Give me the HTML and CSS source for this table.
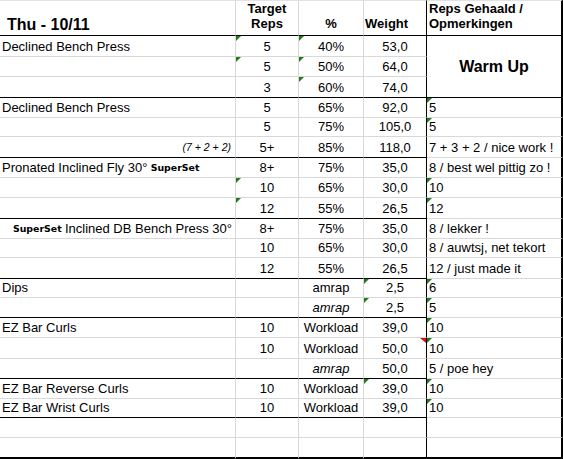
FILE: index.html
```html
<!DOCTYPE html>
<html lang="nl">
<head>
<meta charset="utf-8">
<title>Thu - 10/11</title>
<link rel="stylesheet" href="styles.css">
</head>
<body>
<div class="sheet">
  <div class="row head">
    <div class="c n1 title">Thu - 10/11</div>
    <div class="c n2 ctr">Target<br>Reps</div>
    <div class="c n3 ctr">%</div>
    <div class="c n4 hw">Weight</div>
    <div class="c n5">Reps Gehaald /<br>Opmerkingen</div>
  </div>

  <div class="row">
    <div class="c n1">Declined Bench Press</div>
    <div class="c n2 ctr tri">5</div>
    <div class="c n3 ctr tri">40%</div>
    <div class="c n4 ctr">53,0</div>
    <div class="c n5 warm">Warm Up</div>
  </div>
  <div class="row">
    <div class="c n1"></div>
    <div class="c n2 ctr tri">5</div>
    <div class="c n3 ctr tri">50%</div>
    <div class="c n4 ctr">64,0</div>
  </div>
  <div class="row end">
    <div class="c n1"></div>
    <div class="c n2 ctr">3</div>
    <div class="c n3 ctr tri">60%</div>
    <div class="c n4 ctr">74,0</div>
  </div>

  <div class="row">
    <div class="c n1">Declined Bench Press</div>
    <div class="c n2 ctr">5</div>
    <div class="c n3 ctr">65%</div>
    <div class="c n4 ctr">92,0</div>
    <div class="c n5 tri">5</div>
  </div>
  <div class="row">
    <div class="c n1"></div>
    <div class="c n2 ctr">5</div>
    <div class="c n3 ctr">75%</div>
    <div class="c n4 ctr">105,0</div>
    <div class="c n5 tri">5</div>
  </div>
  <div class="row end">
    <div class="c n1 r note">(7 + 2 + 2)</div>
    <div class="c n2 ctr">5+</div>
    <div class="c n3 ctr">85%</div>
    <div class="c n4 ctr">118,0</div>
    <div class="c n5">7 + 3 + 2 / nice work !</div>
  </div>

  <div class="row">
    <div class="c n1">Pronated Inclined Fly 30°<span class="ss"> SuperSet</span></div>
    <div class="c n2 ctr">8+</div>
    <div class="c n3 ctr">75%</div>
    <div class="c n4 ctr">35,0</div>
    <div class="c n5">8 / best wel pittig zo !</div>
  </div>
  <div class="row">
    <div class="c n1"></div>
    <div class="c n2 ctr tri">10</div>
    <div class="c n3 ctr">65%</div>
    <div class="c n4 ctr">30,0</div>
    <div class="c n5 tri">10</div>
  </div>
  <div class="row end">
    <div class="c n1"></div>
    <div class="c n2 ctr tri">12</div>
    <div class="c n3 ctr">55%</div>
    <div class="c n4 ctr">26,5</div>
    <div class="c n5 tri">12</div>
  </div>

  <div class="row">
    <div class="c n1 r rp"><span class="ss">SuperSet </span>Inclined DB Bench Press 30°</div>
    <div class="c n2 ctr">8+</div>
    <div class="c n3 ctr">75%</div>
    <div class="c n4 ctr">35,0</div>
    <div class="c n5">8 / lekker !</div>
  </div>
  <div class="row">
    <div class="c n1"></div>
    <div class="c n2 ctr">10</div>
    <div class="c n3 ctr">65%</div>
    <div class="c n4 ctr">30,0</div>
    <div class="c n5">8 / auwtsj, net tekort</div>
  </div>
  <div class="row end">
    <div class="c n1"></div>
    <div class="c n2 ctr">12</div>
    <div class="c n3 ctr">55%</div>
    <div class="c n4 ctr">26,5</div>
    <div class="c n5">12 / just made it</div>
  </div>

  <div class="row">
    <div class="c n1">Dips</div>
    <div class="c n2 ctr"></div>
    <div class="c n3 ctr">amrap</div>
    <div class="c n4 ctr tri">2,5</div>
    <div class="c n5 tri">6</div>
  </div>
  <div class="row end">
    <div class="c n1"></div>
    <div class="c n2 ctr"></div>
    <div class="c n3 ctr it">amrap</div>
    <div class="c n4 ctr tri">2,5</div>
    <div class="c n5 tri">5</div>
  </div>

  <div class="row">
    <div class="c n1">EZ Bar Curls</div>
    <div class="c n2 ctr">10</div>
    <div class="c n3 ctr">Workload</div>
    <div class="c n4 ctr">39,0</div>
    <div class="c n5 tri">10</div>
  </div>
  <div class="row">
    <div class="c n1"></div>
    <div class="c n2 ctr">10</div>
    <div class="c n3 ctr">Workload</div>
    <div class="c n4 ctr cmt">50,0</div>
    <div class="c n5 tri">10</div>
  </div>
  <div class="row end">
    <div class="c n1"></div>
    <div class="c n2 ctr"></div>
    <div class="c n3 ctr it">amrap</div>
    <div class="c n4 ctr">50,0</div>
    <div class="c n5">5 / poe hey</div>
  </div>

  <div class="row">
    <div class="c n1">EZ Bar Reverse Curls</div>
    <div class="c n2 ctr">10</div>
    <div class="c n3 ctr">Workload</div>
    <div class="c n4 ctr tri">39,0</div>
    <div class="c n5 tri">10</div>
  </div>
  <div class="row end">
    <div class="c n1">EZ Bar Wrist Curls</div>
    <div class="c n2 ctr">10</div>
    <div class="c n3 ctr">Workload</div>
    <div class="c n4 ctr">39,0</div>
    <div class="c n5 tri">10</div>
  </div>

  <div class="row">
    <div class="c n1"></div>
    <div class="c n2"></div>
    <div class="c n3"></div>
    <div class="c n4"></div>
    <div class="c n5"></div>
  </div>
  <div class="row last">
    <div class="c n1"></div>
    <div class="c n2"></div>
    <div class="c n3"></div>
    <div class="c n4"></div>
    <div class="c n5"></div>
  </div>
</div>
</body>
</html>
```
FILE: styles.css
```css
html, body {
  margin: 0;
  padding: 0;
  background: #ffffff;
}

body {
  font-family: "Liberation Sans", Arial, sans-serif;
  font-size: 13px;
  color: #000000;
}

.sheet {
  display: grid;
  width: 563px;
  height: 459px;
  grid-template-columns: 236px 63px 65px 63px 136px;
  grid-template-rows: 36px 21px 20px 21px 20px 19px 21px 20px 20px 21px 20px 19px 21px 19px 20px 20px 21px 20px 20px 19px 20px 21px;
}

.row {
  display: contents;
}

.c {
  position: relative;
  box-sizing: border-box;
  display: flex;
  align-items: flex-end;
  justify-content: flex-start;
  padding: 0 2px 2px 2px;
  line-height: 15px;
  white-space: nowrap;
  border-right: 1px solid #d8d8d8;
  border-bottom: 1px solid #d8d8d8;
}

.n1 { grid-column: 1; }
.n2 { grid-column: 2; }
.n3 { grid-column: 3; }
.n4 { grid-column: 4; border-right-color: #000000; }
.n5 { grid-column: 5; border-right: 2px solid #000000; }

.ctr { justify-content: center; text-align: center; }
.r { justify-content: flex-end; }
.rp { padding-right: 3px; }

.it { font-style: italic; }

.note {
  font-style: italic;
  font-size: 10.5px;
  padding-right: 4px;
}

.ss {
  font-family: "DejaVu Sans", Verdana, sans-serif;
  font-weight: bold;
  font-size: 9.4px;
  white-space: pre;
}

/* header */
.head .c {
  font-weight: bold;
  border-top: 1px solid #e2e2e2;
  border-bottom-color: #000000;
  padding-bottom: 4px;
}
.head .n4, .head .n5 { border-right-color: #000000; }
.head .hw { padding-left: 1px; }
.head .title {
  font-size: 16px;
  line-height: 18px;
  padding-left: 7px;
  padding-bottom: 1px;
}

/* group separators (not in the remarks column) */
.end .n1, .end .n2, .end .n3, .end .n4 {
  border-bottom-color: #000000;
}

.last .c {
  border-bottom: 2px solid #000000;
}

.warm {
  grid-row: 2 / span 3;
  align-items: center;
  justify-content: center;
  font-weight: bold;
  font-size: 16px;
  line-height: 18px;
  padding: 0;
  border-bottom-color: #000000;
}

/* Excel cell indicators */
.tri::before {
  content: "";
  position: absolute;
  left: 0;
  top: 0;
  border-top: 5px solid #1d7d1d;
  border-right: 5px solid transparent;
}

.cmt::after {
  content: "";
  position: absolute;
  right: 0;
  top: 0;
  border-top: 5px solid #e01010;
  border-left: 6px solid transparent;
}
```
